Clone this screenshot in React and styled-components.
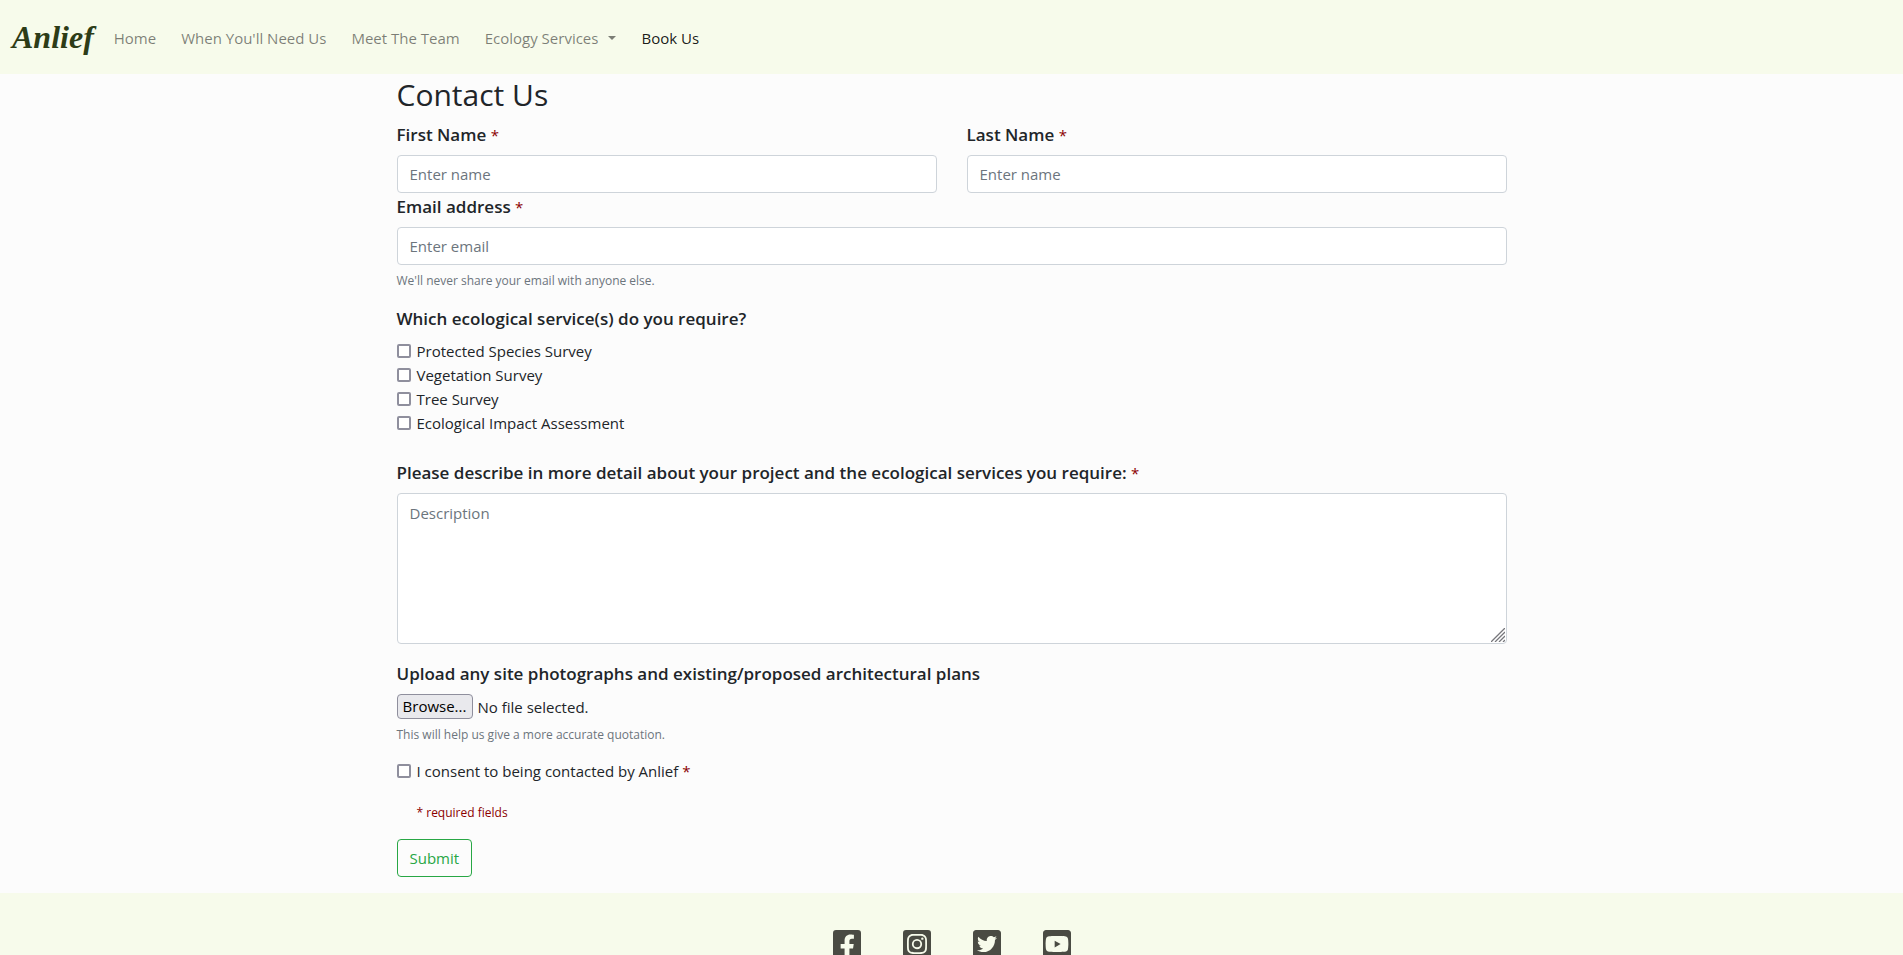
import React, { useRef, useState } from "react";
import styled, { createGlobalStyle } from "styled-components";
import {
  FaFacebookSquare,
  FaInstagramSquare,
  FaTwitterSquare,
  FaYoutubeSquare,
} from "react-icons/fa";

const GlobalStyle = createGlobalStyle`
  *, *::before, *::after { box-sizing: border-box; }
  body {
    margin: 0;
    background: #fcfcfc;
    color: #212529;
    font-family: "Segoe UI", "Open Sans", "Noto Sans", sans-serif;
    font-size: 15px;
    line-height: 24px;
  }
  button, input, textarea { font: inherit; }
`;

const Navbar = styled.header`
  display: flex;
  align-items: center;
  gap: 20px;
  min-height: 74px;
  padding: 0 12px;
  background: #f7fbeb;
`;

const Brand = styled.a`
  color: #2d3c17;
  font: italic bold 32px/40px "Liberation Serif", serif;
  text-decoration: none;
`;

const NavList = styled.nav`
  display: flex;
  flex-wrap: wrap;
  gap: 25px;
  padding-top: 2px;
`;

const NavLink = styled.a`
  display: inline-flex;
  align-items: center;
  gap: 10px;
  color: ${(p) => (p.$active ? "rgba(0, 0, 0, 0.9)" : "rgba(0, 0, 0, 0.5)")};
  text-decoration: none;
`;

const Caret = styled.span`
  border-top: 4px solid currentColor;
  border-left: 4px solid transparent;
  border-right: 4px solid transparent;
`;

const Container = styled.main`
  width: 100%;
  max-width: 1140px;
  margin: 0 auto;
  padding: 0 15px 16px;
`;

const Title = styled.h1`
  margin: 0 0 5px;
  font-size: 30px;
  font-weight: 400;
  line-height: 42px;
`;

const Columns = styled.div`
  display: grid;
  grid-template-columns: 1fr 1fr;
  column-gap: 30px;
`;

const Group = styled.div`
  margin-bottom: ${(p) => p.$space || 0}px;
`;

const Fieldset = styled.fieldset`
  margin: 0 0 24px;
  padding: 0;
  border: 0;
`;

const Label = styled.label`
  display: block;
  margin-bottom: 6px;
  padding: 0;
  font-size: 17px;
  font-weight: 600;
  line-height: 28px;
`;

const Star = styled.span`
  color: #8b0000;
  font-size: 15px;
  font-weight: 400;
`;

const Input = styled.input`
  display: block;
  width: 100%;
  height: 38px;
  padding: 6px 12px;
  border: 1px solid #ced4da;
  border-radius: 4px;
  background: #fff;
  color: #495057;
  &::placeholder { color: #6c757d; opacity: 1; }
`;

const AreaWrap = styled.div`
  position: relative;
`;

const TextArea = styled(Input)`
  height: 151px;
  padding-top: 7px;
  resize: vertical;
  &::-webkit-resizer { background: transparent; }
`;

const Grip = styled.svg`
  position: absolute;
  right: 2px;
  bottom: 2px;
  pointer-events: none;
`;

const Help = styled.small`
  display: block;
  margin-top: 4px;
  color: #6c757d;
  font-size: 12px;
  line-height: 24px;
`;

const CheckRow = styled.label`
  display: flex;
  align-items: center;
  gap: 6px;
`;

const Checkbox = styled.input`
  appearance: none;
  width: 14px;
  height: 14px;
  margin: 0;
  border: 2px solid #8f8f9d;
  border-radius: 2px;
  background: #fff;
  &:checked { background: #28a745; }
`;

const FileRow = styled.div`
  display: flex;
  align-items: center;
  gap: 5px;
`;

const BrowseButton = styled.button`
  width: 76px;
  height: 25px;
  padding: 0;
  border: 1px solid #8f8f9d;
  border-radius: 4px;
  background: #e9e9ed;
  color: #000;
  line-height: 23px;
`;

const RequiredNote = styled.p`
  margin: 18px 0 14px 20px;
  color: #8b0000;
  font-size: 12px;
  line-height: 24px;
`;

const SubmitButton = styled.button`
  height: 38px;
  padding: 0 12px;
  border: 1px solid #28a745;
  border-radius: 4px;
  background: transparent;
  color: #28a745;
`;

const Footer = styled.footer`
  display: flex;
  justify-content: center;
  gap: 42px;
  padding: 35px 15px 36px;
  background: #f7fbeb;
`;

const SocialLink = styled.a`
  display: flex;
  color: #4a4b43;
  svg { width: 28px; height: 32px; }
`;

const services = [
  "Protected Species Survey",
  "Vegetation Survey",
  "Tree Survey",
  "Ecological Impact Assessment",
];

const links = [
  { text: "Home" },
  { text: "When You'll Need Us" },
  { text: "Meet The Team" },
  { text: "Ecology Services", menu: true },
  { text: "Book Us", active: true },
];

const socials = [
  { name: "Facebook", Icon: FaFacebookSquare },
  { name: "Instagram", Icon: FaInstagramSquare },
  { name: "Twitter", Icon: FaTwitterSquare },
  { name: "YouTube", Icon: FaYoutubeSquare },
];

function FilePicker({ id }) {
  const ref = useRef(null);
  const [name, setName] = useState("No file selected.");
  return (
    <FileRow>
      <input
        id={id}
        ref={ref}
        type="file"
        hidden
        onChange={(e) => setName(e.target.files[0]?.name || "No file selected.")}
      />
      <BrowseButton type="button" onClick={() => ref.current.click()}>
        Browse...
      </BrowseButton>
      <span>{name}</span>
    </FileRow>
  );
}

export default function App() {
  return (
    <>
      <GlobalStyle />
      <Navbar>
        <Brand href="#home">Anlief</Brand>
        <NavList>
          {links.map((l) => (
            <NavLink key={l.text} href="#" $active={l.active}>
              {l.text}
              {l.menu && <Caret />}
            </NavLink>
          ))}
        </NavList>
      </Navbar>
      <Container>
        <Title>Contact Us</Title>
        <form onSubmit={(e) => e.preventDefault()}>
          <Columns>
            <Group>
              <Label htmlFor="first">First Name <Star>*</Star></Label>
              <Input id="first" placeholder="Enter name" />
            </Group>
            <Group>
              <Label htmlFor="last">Last Name <Star>*</Star></Label>
              <Input id="last" placeholder="Enter name" />
            </Group>
          </Columns>
          <Group $space={12}>
            <Label htmlFor="email">Email address <Star>*</Star></Label>
            <Input id="email" type="email" placeholder="Enter email" />
            <Help>We'll never share your email with anyone else.</Help>
          </Group>
          <Fieldset>
            <Label as="legend">Which ecological service(s) do you require?</Label>
            {services.map((s) => (
              <CheckRow key={s}>
                <Checkbox type="checkbox" />
                {s}
              </CheckRow>
            ))}
          </Fieldset>
          <Group $space={16}>
            <Label htmlFor="details">
              Please describe in more detail about your project and the ecological services you require: <Star>*</Star>
            </Label>
            <AreaWrap>
              <TextArea as="textarea" id="details" placeholder="Description" />
              <Grip width="14" height="14" viewBox="0 0 14 14" stroke="#77777c" strokeWidth="1.3" aria-hidden="true">
                <path d="M0 14 14 0M4 14 14 4M8 14l6-6M12 14l2-2" />
              </Grip>
            </AreaWrap>
          </Group>
          <Group $space={12}>
            <Label htmlFor="plans">Upload any site photographs and existing/proposed architectural plans</Label>
            <FilePicker id="plans" />
            <Help>This will help us give a more accurate quotation.</Help>
          </Group>
          <CheckRow>
            <Checkbox type="checkbox" />
            <span>I consent to being contacted by Anlief <Star>*</Star></span>
          </CheckRow>
          <RequiredNote>* required fields</RequiredNote>
          <SubmitButton type="submit">Submit</SubmitButton>
        </form>
      </Container>
      <Footer>
        {socials.map(({ name, Icon }) => (
          <SocialLink key={name} href="#" aria-label={name}>
            <Icon />
          </SocialLink>
        ))}
      </Footer>
    </>
  );
}
